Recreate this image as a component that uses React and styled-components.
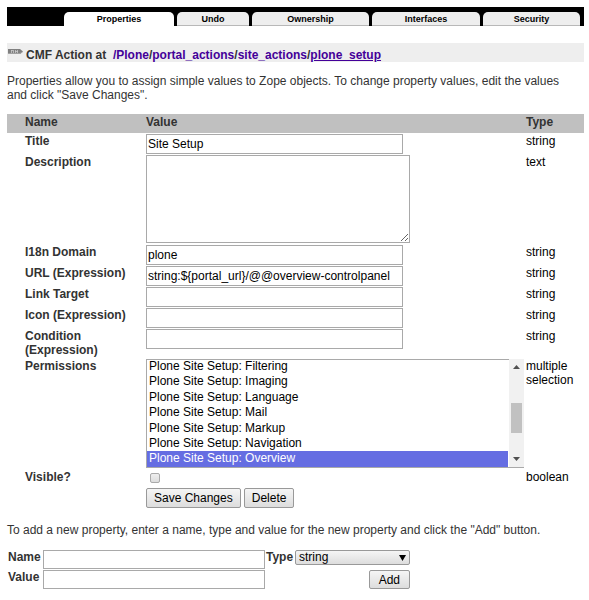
import React, { useEffect, useRef } from "react";
import styled, { createGlobalStyle } from "styled-components";

const GlobalStyle = createGlobalStyle`
  *, *::before, *::after { box-sizing: border-box; }
  body {
    margin: 7px 5px 7px 7px;
    background: #fff;
    color: #333;
    font: 12px/14px "Liberation Sans", Arial, sans-serif;
  }
  input, textarea, select, button {
    font: 12px/14px "Liberation Sans", Arial, sans-serif;
    color: #000;
    margin: 0;
  }
`;

const TabBar = styled.nav`
  display: flex;
  gap: 3px;
  height: 19px;
  padding: 5px 4px 0 57px;
  background: #000;
`;

const Tab = styled.a`
  flex: ${(p) => p.$weight} 1 0;
  border-radius: 5px 5px 0 0;
  background: ${(p) => (p.$active ? "#fff" : "#eee")};
  border-bottom: 1px solid ${(p) => (p.$active ? "#fff" : "#b8b8b8")};
  color: #000;
  font: bold 9px/14px "Liberation Sans", Arial, sans-serif;
  text-align: center;
  text-decoration: none;
`;

const TitleBar = styled.h1`
  display: flex;
  align-items: flex-start;
  height: 19px;
  margin: 17px 0 12px;
  padding: 5px 0 0 1px;
  background: #eee;
  font-size: 12px;
  line-height: 14px;
  white-space: pre;

  svg { flex: none; margin-right: 3px; }
`;

const Crumb = styled.a`
  color: #409;
  text-decoration: ${(p) => (p.$current ? "underline" : "none")};
`;

const Help = styled.p`
  margin: 0 0 12px;
  padding-right: 12px;
`;

const Properties = styled.table`
  width: 100%;
  table-layout: fixed;
  border-collapse: collapse;
  margin-bottom: 15px;

  th, td { vertical-align: top; text-align: left; }
`;

const NameCol = styled.col`
  width: 139px;
`;

const TypeCol = styled.col`
  width: 58px;
`;

const HeadCell = styled.th`
  height: 19px;
  padding: 1px 0 1px ${(p) => (p.$indent ? 18 : 0)}px;
  background: #c0c0c0;
`;

const NameCell = styled.th`
  padding: 1px 8px ${(p) => (p.$compact ? 0 : 1)}px 18px;
`;

const ValueCell = styled.td`
  padding: 1px 2px ${(p) => (p.$compact ? 0 : 1)}px 0;
`;

const TypeCell = styled.td`
  padding: 1px 0 0;
  color: #000;
`;

const TextField = styled.input`
  display: block;
  width: ${(p) => p.$width};
  height: ${(p) => p.$height || 20}px;
  padding: 1px;
  border: 1px solid #a9a9a9;
  border-radius: 0;
  background: #fff;
  outline: none;
`;

const TextArea = styled.textarea`
  display: block;
  width: 264px;
  height: 88px;
  padding: 2px;
  border: 1px solid #a9a9a9;
  background: #fff;
`;

const ListFrame = styled.div`
  display: flex;
  height: 109px;
`;

const ListBox = styled.select`
  flex: 1;
  min-width: 0;
  height: 109px;
  padding: 0 1px 0 0;
  border: 1px solid #a9a9a9;
  border-right: 0;
  border-radius: 0;
  background: #fff;
  outline: none;
  scrollbar-width: none;

  option { box-sizing: content-box; }

  option:checked {
    background: #656de2 linear-gradient(#656de2, #656de2);
    color: #fff;
  }
`;

const ScrollTrack = styled.div`
  display: flex;
  flex-direction: column;
  align-items: center;
  width: 15px;
  border-bottom: 1px solid #a9a9a9;
  background: #f1f1f1;
`;

const ScrollThumb = styled.div`
  width: 11px;
  height: 30px;
  margin: auto 0 18px;
  background: #c1c1c1;
`;

const CheckBox = styled.input`
  display: block;
  appearance: none;
  width: 10px;
  height: 10px;
  margin: 3px 0 3px 4px;
  border: 1px solid #aaa;
  border-radius: 2px;
  background: linear-gradient(#eee, #ddd);
`;

const Button = styled.button`
  height: ${(p) => p.$height || 20}px;
  padding: 0 ${(p) => p.$pad || 7}px;
  border: 1px solid #999;
  border-radius: 2px;
  background: linear-gradient(#f5f5f5, #ddd);
`;

const Actions = styled.div`
  display: flex;
  gap: 3px;
`;

const AddGrid = styled.form`
  display: grid;
  grid-template-columns: 35px 222px 30px 115px;
  row-gap: 1px;
  margin-top: 13px;
  padding-left: 1px;

  label { font-weight: bold; }
`;

const TypeLabel = styled.label`
  padding-left: 1px;
`;

const TypeField = styled.div`
  display: grid;
  align-self: start;

  select, svg { grid-area: 1 / 1; }
  svg { justify-self: end; align-self: center; margin-right: 4px; pointer-events: none; }
`;

const TypeSelect = styled.select`
  appearance: none;
  height: 15px;
  padding: 0 3px;
  border: 1px solid #999;
  border-radius: 2px;
  background: linear-gradient(#f5f5f5, #ddd);
  line-height: 13px;
`;

const AddAction = styled.div`
  grid-column: 4;
  display: flex;
  justify-content: flex-end;
`;

const ArrowSlot = styled.div`
  display: flex;
  padding: 6px 0;
`;

const tabs = [
  ["Properties", 110],
  ["Undo", 72],
  ["Ownership", 117],
  ["Interfaces", 108],
  ["Security", 97],
];

const fields = [
  { id: "i18n_domain", name: "I18n Domain", value: "plone" },
  { id: "url_expr", name: "URL (Expression)", value: "string:${portal_url}/@@overview-controlpanel" },
  { id: "link_target", name: "Link Target", value: "" },
  { id: "icon_expr", name: "Icon (Expression)", value: "" },
  { id: "condition", name: "Condition (Expression)", value: "", tall: true },
];

const permissions = ["Filtering", "Imaging", "Language", "Mail", "Markup", "Navigation", "Overview"];

function ActionIcon() {
  return (
    <svg width="15" height="7" viewBox="0 0 15 7" aria-hidden="true">
      <path d="M0 1h12l3 2.500L12 6H0z" fill="#808080" />
      <path d="M0 5.500h12L14.500 4" fill="none" stroke="#a0a0a0" />
      <path d="M3.500 2v3M5.500 2v3M7.500 2v3M9.500 2v3M3 2.500h2M7 3.500h3" stroke="#c8c8c8" strokeWidth=".8" />
    </svg>
  );
}

function Arrow({ d, fill = "#505050", width = 7, height = 4 }) {
  return (
    <svg width={width} height={height} viewBox={`0 0 ${width} ${height}`} aria-hidden="true">
      <path d={d} fill={fill} />
    </svg>
  );
}

function StringRow({ id, name, value, tall }) {
  return (
    <tr>
      <NameCell $compact={!tall} scope="row"><label htmlFor={id}>{name}</label></NameCell>
      <ValueCell $compact><TextField id={id} $width="257px" defaultValue={value} /></ValueCell>
      <TypeCell>string</TypeCell>
    </tr>
  );
}

function PermissionList() {
  const ref = useRef(null);
  useEffect(() => {
    ref.current.scrollTop = ref.current.scrollHeight;
  }, []);
  return (
    <ListFrame>
      <ListBox id="permissions" ref={ref} multiple size={7} defaultValue={["Overview"]}>
        {permissions.map((p) => (
          <option key={p} value={p}>{`Plone Site Setup: ${p}`}</option>
        ))}
      </ListBox>
      <ScrollTrack aria-hidden="true">
        <ArrowSlot><Arrow d="M0 4L3.500 0L7 4z" /></ArrowSlot>
        <ScrollThumb />
        <ArrowSlot><Arrow d="M0 0H7L3.500 4z" /></ArrowSlot>
      </ScrollTrack>
    </ListFrame>
  );
}

export default function App() {
  return (
    <>
      <GlobalStyle />
      <TabBar>
        {tabs.map(([name, weight], i) => (
          <Tab key={name} href="#" $weight={weight} $active={i === 0}>{name}</Tab>
        ))}
      </TabBar>

      <TitleBar>
        <ActionIcon />
        <span>
          CMF Action at{"  "}
          <Crumb href="#">/Plone</Crumb>/<Crumb href="#">portal_actions</Crumb>/
          <Crumb href="#">site_actions</Crumb>/<Crumb href="#" $current>plone_setup</Crumb>
        </span>
      </TitleBar>

      <Help>
        Properties allow you to assign simple values to Zope objects. To change
        property values, edit the values and click "Save Changes".
      </Help>

      <Properties>
        <colgroup><NameCol /><col /><TypeCol /></colgroup>
        <thead>
          <tr>
            <HeadCell scope="col" $indent>Name</HeadCell>
            <HeadCell scope="col">Value</HeadCell>
            <HeadCell scope="col">Type</HeadCell>
          </tr>
        </thead>
        <tbody>
          <StringRow id="title" name="Title" value="Site Setup" />
          <tr>
            <NameCell scope="row"><label htmlFor="description">Description</label></NameCell>
            <ValueCell><TextArea id="description" /></ValueCell>
            <TypeCell>text</TypeCell>
          </tr>
          {fields.map((f) => <StringRow key={f.id} {...f} />)}
          <tr>
            <NameCell scope="row"><label htmlFor="permissions">Permissions</label></NameCell>
            <ValueCell><PermissionList /></ValueCell>
            <TypeCell>multiple selection</TypeCell>
          </tr>
          <tr>
            <NameCell scope="row"><label htmlFor="visible">Visible?</label></NameCell>
            <ValueCell><CheckBox id="visible" type="checkbox" /></ValueCell>
            <TypeCell>boolean</TypeCell>
          </tr>
          <tr>
            <td />
            <ValueCell $compact>
              <Actions>
                <Button type="button">Save Changes</Button>
                <Button type="button">Delete</Button>
              </Actions>
            </ValueCell>
            <td />
          </tr>
        </tbody>
      </Properties>

      <Help>
        To add a new property, enter a name, type and value for the new property
        and click the "Add" button.
      </Help>

      <AddGrid>
        <label htmlFor="new-name">Name</label>
        <TextField id="new-name" $width="100%" $height={19} />
        <TypeLabel htmlFor="new-type">Type</TypeLabel>
        <TypeField>
          <TypeSelect id="new-type" defaultValue="string"><option>string</option></TypeSelect>
          <Arrow d="M0 0H7L3.500 6z" fill="#000" height={6} />
        </TypeField>
        <label htmlFor="new-value">Value</label>
        <TextField id="new-value" $width="100%" $height={19} />
        <AddAction><Button type="button" $height={19} $pad={9}>Add</Button></AddAction>
      </AddGrid>
    </>
  );
}
